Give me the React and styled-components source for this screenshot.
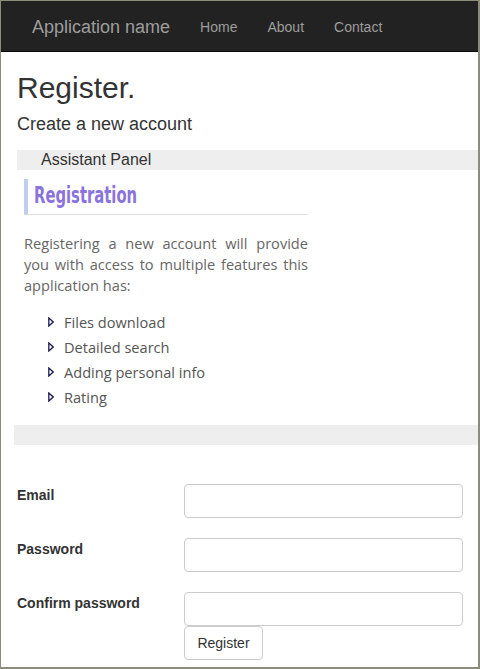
import React from "react";
import styled, { createGlobalStyle } from "styled-components";

const Global = createGlobalStyle`
  html, body { margin: 0; padding: 0; background: #fff; }
  * { box-sizing: border-box; }
`;

const Frame = styled.div`
  width: 480px;
  height: 669px;
  border-style: solid;
  border-color: #8b8c7c;
  border-width: 1px 2px 2px 1px;
  overflow: hidden;
  font-family: "Liberation Sans", Arial, sans-serif;
  color: #333;
  background: #fff;
`;

const NavBar = styled.nav`
  height: 51px;
  background: #222;
  border-bottom: 1px solid #080808;
  display: flex;
  align-items: center;
  padding-left: 31px;
  padding-top: 1px;
`;

const Brand = styled.a`
  font-size: 18px;
  line-height: 20px;
  color: #9d9d9d;
  text-decoration: none;
  margin-right: 15px;
`;

const NavLink = styled.a`
  font-size: 14px;
  line-height: 20px;
  color: #9d9d9d;
  text-decoration: none;
  padding: 0 15px;
`;

const Main = styled.main`
  padding: 19px 0 0 16px;
`;

const Title = styled.h2`
  margin: 0;
  font-size: 30px;
  line-height: 33px;
  font-weight: 500;
`;

const Subtitle = styled.h4`
  margin: 10px 0 0;
  font-size: 18px;
  line-height: 20px;
  font-weight: 500;
`;

const PanelBar = styled.div`
  background: #eeeeee;
  height: 20px;
  margin-left: ${(p) => p.$offset}px;
  margin-top: ${(p) => p.$top}px;
  padding-left: 24px;
  font-size: 16px;
  line-height: 20px;
  color: #333;
`;

const PanelBody = styled.div`
  padding-left: 7px;
  width: 291px;
`;

const SectionHead = styled.h3`
  margin: 9px 0 0;
  height: 36px;
  border-left: 4px solid #c3cdf0;
  border-bottom: 1px solid #dddddd;
  padding-left: 6px;
  font-family: "DejaVu Sans Condensed", "DejaVu Sans", sans-serif;
  font-weight: 700;
  font-size: 23px;
  line-height: 33px;
  color: #8a73dc;
`;

const HeadText = styled.span`
  display: inline-block;
  transform: scaleX(0.715);
  transform-origin: left center;
  white-space: nowrap;
`;

const Intro = styled.p`
  margin: 18px 0 0;
  font-family: "Open Sans", "Noto Sans", sans-serif;
  font-size: 14.6px;
  line-height: 21px;
  color: #666;
  text-align: justify;
`;

const List = styled.ul`
  list-style: none;
  margin: 13px 0 0;
  padding: 0 0 0 24px;
`;

const Item = styled.li`
  display: flex;
  align-items: center;
  gap: 10px;
  height: 25px;
  font-family: "Open Sans", "Noto Sans", sans-serif;
  font-size: 14.6px;
  color: #555;
`;

const Marker = () => (
  <svg width="6" height="10" viewBox="0 0 6 10">
    <path d="M0.8 1 L5.2 5 L0.8 9 Z" fill="none" stroke="#1c1a55" strokeWidth="1.3" strokeLinejoin="miter" />
  </svg>
);

const Form = styled.form`
  margin-top: 39px;
  display: grid;
  grid-template-columns: 167px 279px;
  row-gap: 20px;
`;

const Label = styled.label`
  font-size: 14px;
  font-weight: 700;
  line-height: 20px;
  padding-top: 1px;
  color: #333;
`;

const Input = styled.input`
  height: 34px;
  width: 279px;
  border: 1px solid #ccc;
  border-radius: 4px;
  background: #fff;
  padding: 6px 12px;
  font-size: 14px;
`;

const ButtonCell = styled.div`
  grid-column: 2;
  margin-top: -20px;
`;

const Button = styled.button`
  height: 34px;
  width: 79px;
  border: 1px solid #ccc;
  border-radius: 4px;
  background: #fff;
  font-family: "Liberation Sans", Arial, sans-serif;
  font-size: 14px;
  color: #333;
  padding: 0;
`;

export default function App() {
  const features = ["Files download", "Detailed search", "Adding personal info", "Rating"];
  return (
    <>
      <Global />
      <Frame>
        <NavBar>
          <Brand href="#">Application name</Brand>
          <NavLink href="#">Home</NavLink>
          <NavLink href="#">About</NavLink>
          <NavLink href="#">Contact</NavLink>
        </NavBar>
        <Main>
          <Title>Register.</Title>
          <Subtitle>Create a new account</Subtitle>
          <PanelBar $offset={0} $top={16}>Assistant Panel</PanelBar>
          <PanelBody>
            <SectionHead>
              <HeadText>Registration</HeadText>
            </SectionHead>
            <Intro>
              Registering a new account will provide you with access to multiple features this application has:
            </Intro>
            <List>
              {features.map((f) => (
                <Item key={f}>
                  <Marker />
                  {f}
                </Item>
              ))}
            </List>
          </PanelBody>
          <PanelBar $offset={-3} $top={16} />
          <Form onSubmit={(e) => e.preventDefault()}>
            <Label>Email</Label>
            <Input type="email" />
            <Label>Password</Label>
            <Input type="password" />
            <Label>Confirm password</Label>
            <Input type="password" />
            <ButtonCell>
              <Button type="submit">Register</Button>
            </ButtonCell>
          </Form>
        </Main>
      </Frame>
    </>
  );
}
